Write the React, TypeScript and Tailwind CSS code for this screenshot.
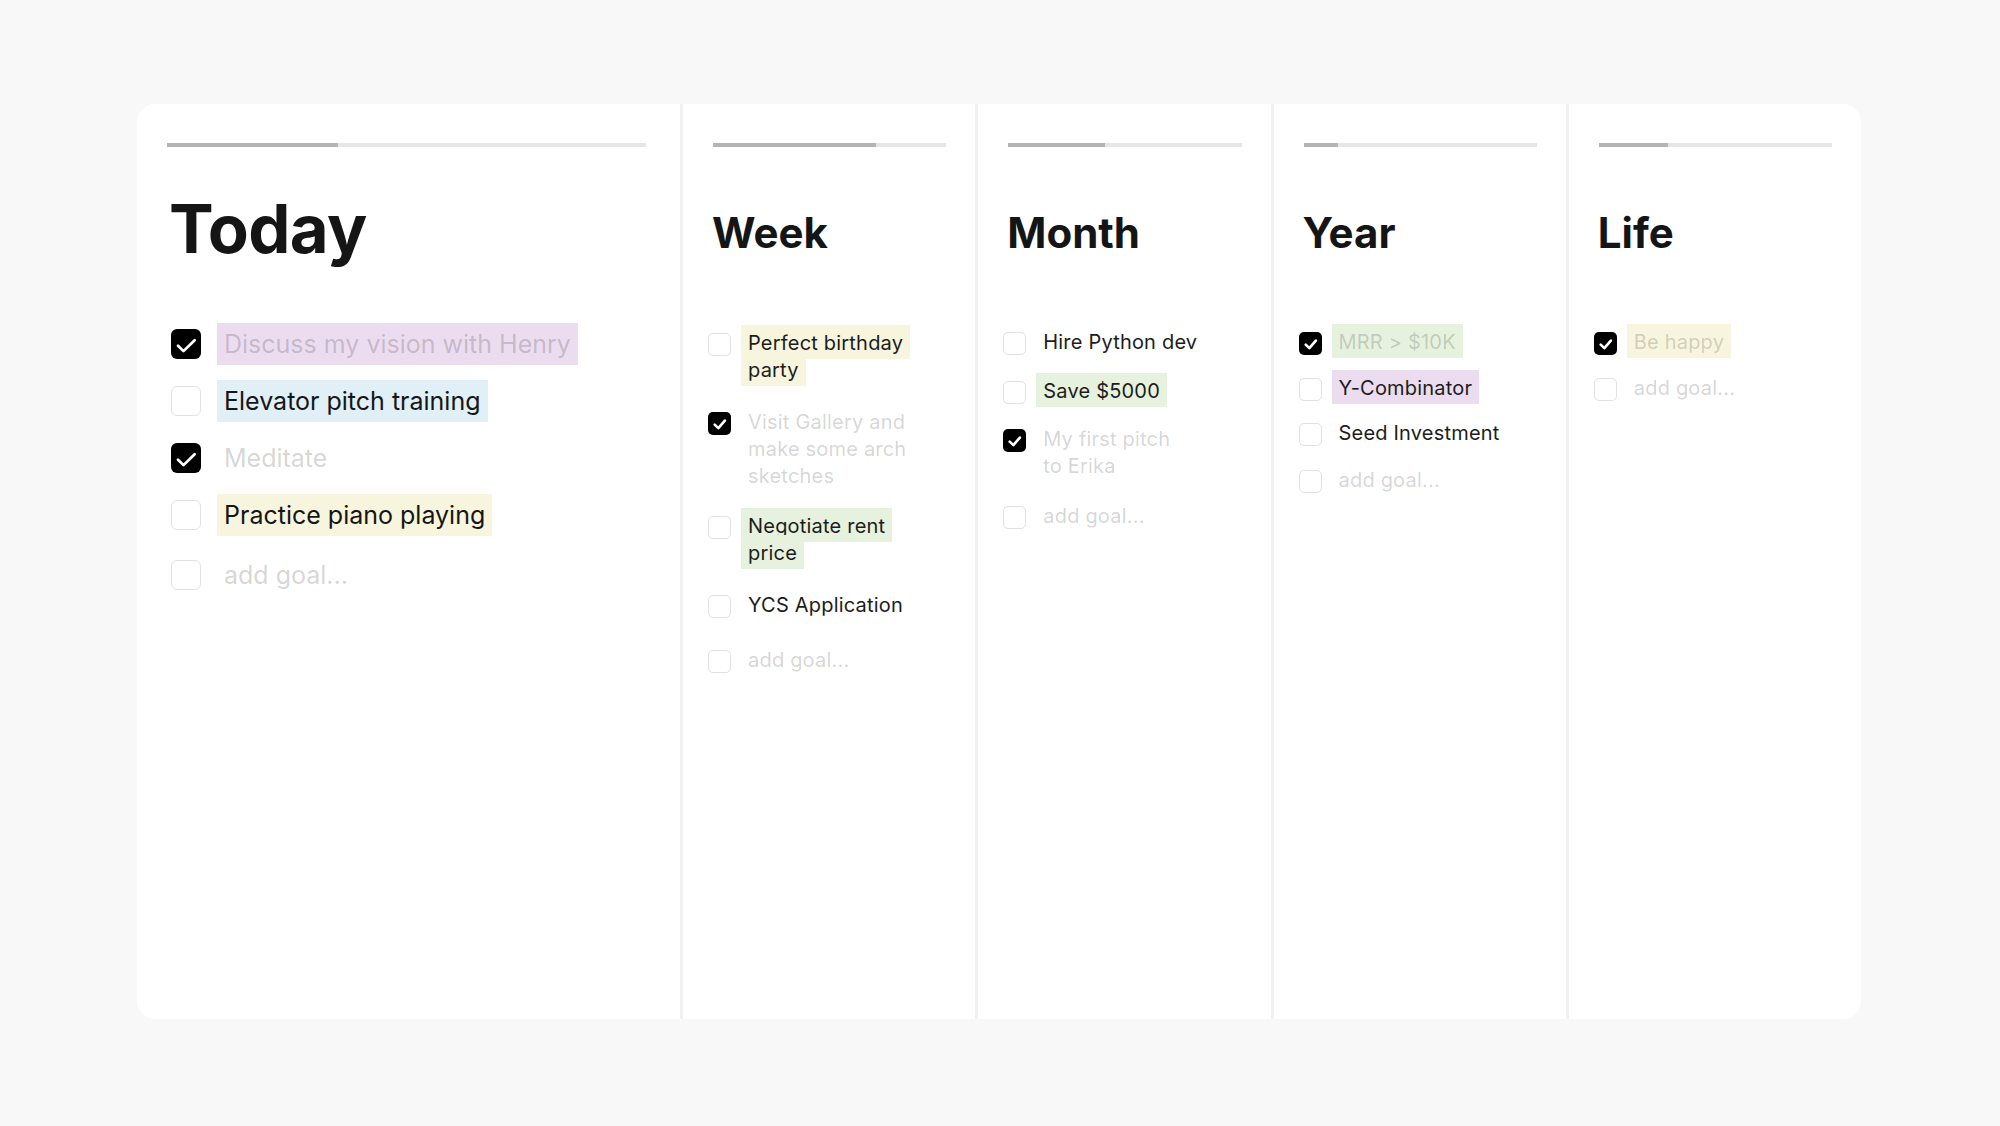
import React from "react";

type Item = {
  lines: string[];
  done?: boolean;
  bg?: string;
  mt?: string;
  placeholder?: boolean;
};

function Check({ done, lg }: { done: boolean; lg?: boolean }) {
  const box = lg
    ? "w-[30px] h-[30px] rounded-[6px]"
    : "w-[23px] h-[23px] rounded-[5px]";
  if (done) {
    return (
      <div className={`${box} shrink-0 bg-black flex items-center justify-center`}>
        {lg ? (
          <svg viewBox="0 0 24 24" className="w-full h-full">
            <path
              d="M5.6 13.4 L10 17.7 L18.9 9"
              fill="none"
              stroke="white"
              strokeWidth={2.2}
              strokeLinecap="round"
              strokeLinejoin="round"
            />
          </svg>
        ) : (
          <svg viewBox="0 0 24 24" className="w-full h-full">
            <path
              d="M7 13.2 L10.8 16.8 L17.6 9"
              fill="none"
              stroke="white"
              strokeWidth={2.8}
              strokeLinecap="round"
              strokeLinejoin="round"
            />
          </svg>
        )}
      </div>
    );
  }
  return <div className={`${box} shrink-0 bg-white border-[1.5px] border-[#e2e2e2]`} />;
}

function Bar({ fill, small }: { fill: number; small?: boolean }) {
  return (
    <div className={`h-[4px] bg-[#e6e6e6] ${small ? "ml-[5px]" : ""}`}>
      <div className="h-full bg-[#b4b4b4]" style={{ width: `${fill}px` }} />
    </div>
  );
}

const todayItems: Item[] = [
  { lines: ["Discuss my vision with Henry"], done: true, bg: "bg-[#ecdcf0]" },
  { lines: ["Elevator pitch training"], bg: "bg-[#e1eff6]", mt: "mt-[25px]" },
  { lines: ["Meditate"], done: true, mt: "mt-[25px]" },
  { lines: ["Practice piano playing"], bg: "bg-[#f8f5de]", mt: "mt-[25px]" },
  { lines: ["add goal..."], placeholder: true, mt: "mt-[28px]" },
];

function TodayCol() {
  return (
    <div className="w-[543px] shrink-0 pl-[30px] pr-[34px] pt-[39px]">
      <Bar fill={171} />
      <h1 className="mt-[48px] ml-[2px] text-[67px] font-bold leading-[68px] tracking-[-0.01em] text-[#151515]">
        Today
      </h1>
      <div className="mt-[65px] ml-[4px] flex flex-col">
        {todayItems.map((it, i) => (
          <div key={i} className={`flex h-[32px] items-center gap-[16px] ${it.mt ?? ""}`}>
            <Check done={!!it.done} lg />
            <span
              className={`px-[7px] py-[5px] text-[25px] leading-[32px] ${it.bg ?? ""} ${
                it.done || it.placeholder ? "text-black/[0.18]" : "text-[#161616]"
              }`}
            >
              {it.lines[0]}
            </span>
          </div>
        ))}
      </div>
    </div>
  );
}

function SmallCol({
  title,
  fill,
  items,
  listMt,
}: {
  title: string;
  fill: number;
  items: Item[];
  listMt: string;
}) {
  return (
    <div className="flex-1 border-l-[3px] border-[#f1f1f1] pl-[25px] pr-[29px] pt-[39px]">
      <Bar fill={fill} small />
      <h2 className="mt-[65px] ml-[4px] text-[42px] font-bold leading-none text-[#151515]">
        {title}
      </h2>
      <div className={`${listMt} flex flex-col`}>
        {items.map((it, i) => (
          <div key={i} className={`flex items-start gap-[10px] ${it.mt ?? ""}`}>
            <div className="mt-[3px]">
              <Check done={!!it.done} />
            </div>
            <div className="flex-1 text-[20px] leading-[27px] tracking-[0.01em]">
              <span
                className={`box-decoration-clone px-[7px] pt-[6px] pb-[4px] ${it.bg ?? ""} ${
                  it.done || it.placeholder ? "text-black/[0.18]" : "text-[#1c1c1c]"
                }`}
              >
                {it.lines.map((l, j) => (
                  <React.Fragment key={j}>
                    {j > 0 && <br />}
                    {l}
                  </React.Fragment>
                ))}
              </span>
            </div>
          </div>
        ))}
      </div>
    </div>
  );
}

const week: Item[] = [
  { lines: ["Perfect birthday", "party"], bg: "bg-[#f8f5de]" },
  { lines: ["Visit Gallery and", "make some arch", "sketches"], done: true, mt: "mt-[25px]" },
  { lines: ["Negotiate rent", "price"], bg: "bg-[#e6f2de]", mt: "mt-[23px]" },
  { lines: ["YCS Application"], mt: "mt-[25px]" },
  { lines: ["add goal..."], placeholder: true, mt: "mt-[28px]" },
];

const month: Item[] = [
  { lines: ["Hire Python dev"] },
  { lines: ["Save $5000"], bg: "bg-[#e6f2de]", mt: "mt-[22px]" },
  { lines: ["My first pitch", "to Erika"], done: true, mt: "mt-[21px]" },
  { lines: ["add goal..."], placeholder: true, mt: "mt-[23px]" },
];

const year: Item[] = [
  { lines: ["MRR > $10K"], done: true, bg: "bg-[#e6f2de]" },
  { lines: ["Y-Combinator"], bg: "bg-[#ecdcf0]", mt: "mt-[19px]" },
  { lines: ["Seed Investment"], mt: "mt-[18px]" },
  { lines: ["add goal..."], placeholder: true, mt: "mt-[20px]" },
];

const life: Item[] = [
  { lines: ["Be happy"], done: true, bg: "bg-[#f8f5de]" },
  { lines: ["add goal..."], placeholder: true, mt: "mt-[19px]" },
];

export default function App() {
  return (
    <div className="min-h-[1126px] w-full bg-[#f8f8f8] pt-[104px] font-['Inter','Noto_Sans',sans-serif]">
      <div className="ml-[137px] flex h-[915px] w-[1724px] overflow-hidden rounded-[18px] bg-white">
        <TodayCol />
        <SmallCol title="Week" fill={163} items={week} listMt="mt-[76px]" />
        <SmallCol title="Month" fill={97} items={month} listMt="mt-[75px]" />
        <SmallCol title="Year" fill={34} items={year} listMt="mt-[75px]" />
        <SmallCol title="Life" fill={69} items={life} listMt="mt-[75px]" />
      </div>
    </div>
  );
}
